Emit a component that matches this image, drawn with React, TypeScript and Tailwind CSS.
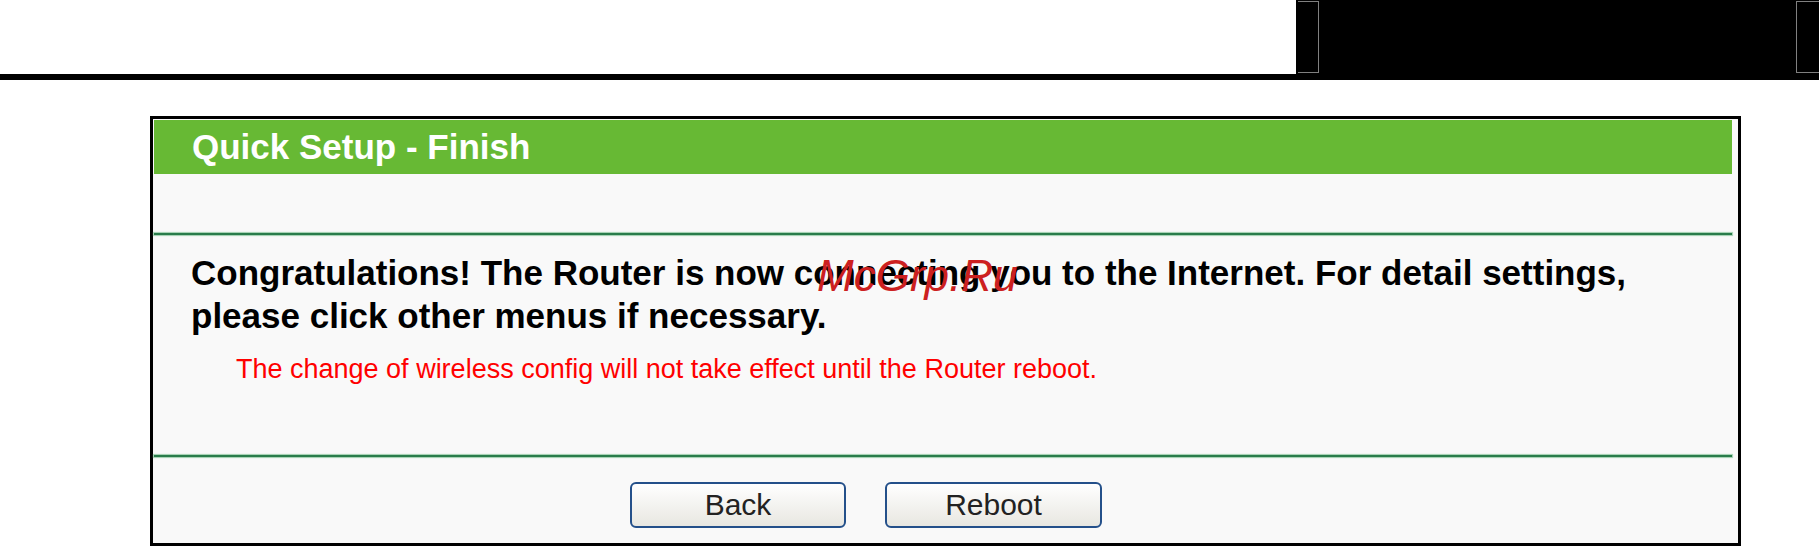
export default function App() {
  return (
    <div className="min-h-screen bg-white font-['Liberation_Sans',Arial,sans-serif]">
      {/* top bar */}
      <div className="h-[74px] flex justify-end">
        <div className="w-[523px] h-full bg-black flex justify-between items-center pl-[2px]">
          <div className="w-[21px] h-[72px] border-y border-r border-[#808080]" />
          <div className="w-[23px] h-[72px] border-y border-l border-[#808080]" />
        </div>
      </div>
      <div className="h-[6px] bg-black" />

      <div className="pt-[36px] pl-[150px]">
        <div className="relative w-[1591px] h-[430px] border-[3px] border-black bg-[#f9f9f9] pt-[1px] pl-[1px] pr-[6px]">
          <div className="h-[54px] bg-[#67b934] text-white font-bold text-[35px] leading-[54px] pl-[38px]">
            Quick Setup - Finish
          </div>

          <div className="mt-[59px] h-[2px] bg-[#2a7c4b] shadow-[0_0_1px_1px_#9fcfae]" />

          <div className="mt-[16px] pl-[37px] font-bold text-[35px] leading-[43px] text-black">
            Congratulations! The Router is now connecting you to the Internet. For detail settings,
            <br />
            please click other menus if necessary.
          </div>
          <div className="mt-[16px] pl-[82px] text-[27px] leading-[32px] text-[#ff0000]">
            The change of wireless config will not take effect until the Router reboot.
          </div>

          <div className="mt-[70px] h-[2px] bg-[#2a7c4b] shadow-[0_0_1px_1px_#9fcfae]" />

          <div className="mt-[25px] ml-[476px] flex gap-[39px]">
            <button className="w-[216px] h-[46px] rounded-[6px] border-2 border-[#24508a] bg-gradient-to-b from-white to-[#e8e7e1] text-[30px] leading-none text-[#222]">
              Back
            </button>
            <button className="w-[217px] h-[46px] rounded-[6px] border-2 border-[#24508a] bg-gradient-to-b from-white to-[#e8e7e1] text-[30px] leading-none text-[#222]">
              Reboot
            </button>
          </div>

          <div className="absolute left-[664px] top-[135px] text-[44px] leading-none italic text-[#cc2020] pointer-events-none">
            McGrp.Ru
          </div>
        </div>
      </div>
    </div>
  );
}
